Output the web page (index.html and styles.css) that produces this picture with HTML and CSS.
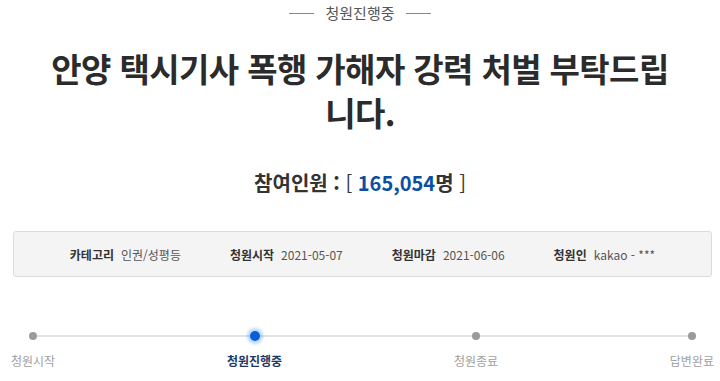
FILE: index.html
```html
<!DOCTYPE html>
<html lang="ko">
<head>
    <meta charset="UTF-8">
    <meta name="viewport" content="width=device-width, initial-scale=1.0">
    <title>청원 상세</title>
    <link rel="stylesheet" href="styles.css">
</head>
<body>
    <div class="wrap">
        <div class="state">
            <span class="state_line"></span>
            <span class="state_txt">청원진행중</span>
            <span class="state_line"></span>
        </div>
        <h1 class="title">안양 택시기사 폭행 가해자 강력 처벌 부탁드립<br>니다.</h1>
        <p class="count">참여인원 : <span class="bracket">[</span> <span class="num">165,054</span>명 <span class="bracket">]</span></p>
        <ul class="info">
            <li class="info_li"><strong>카테고리</strong><span>인권/성평등</span></li>
            <li class="info_li"><strong>청원시작</strong><span>2021-05-07</span></li>
            <li class="info_li"><strong>청원마감</strong><span>2021-06-06</span></li>
            <li class="info_li"><strong>청원인</strong><span>kakao - ***</span></li>
        </ul>
        <ul class="progress">
            <li class="step">
                <span class="dot"></span>
                <span class="step_name">청원시작</span>
            </li>
            <li class="step on">
                <span class="dot"></span>
                <span class="step_name">청원진행중</span>
            </li>
            <li class="step">
                <span class="dot"></span>
                <span class="step_name">청원종료</span>
            </li>
            <li class="step">
                <span class="dot"></span>
                <span class="step_name">답변완료</span>
            </li>
        </ul>
    </div>
</body>
</html>
```
FILE: styles.css
```css
*{
    margin: 0;
    padding: 0;
    list-style: none;
    box-sizing: border-box;
}
body{
    background: #fff;
    font-family: "Noto Sans CJK KR", "Noto Sans", sans-serif;
    color: #333;
}
.wrap{
    width: 720px;
    overflow: hidden;
}
.state{
    display: flex;
    justify-content: center;
    align-items: center;
    gap: 11px;
    padding-top: 3px;
    height: 23px;
}
.state_line{
    width: 25px;
    height: 1px;
    background: #888;
}
.state_txt{
    font-size: 15px;
    line-height: 20px;
    color: #555;
}
.title{
    margin-top: 23px;
    font-size: 33px;
    line-height: 44px;
    font-weight: 700;
    text-align: center;
    color: #2b2b2b;
    letter-spacing: -0.6px;
}
.count{
    margin-top: 35px;
    font-size: 20px;
    line-height: 28px;
    font-weight: 700;
    text-align: center;
    color: #333;
}
.count .bracket{
    font-weight: 400;
}
.count .num{
    color: #0b4ea2;
}
.info{
    margin: 34px 8px 0 13px;
    height: 46px;
    border: 1px solid #dcdcdc;
    border-radius: 3px;
    background: #f4f4f4;
    display: flex;
    justify-content: center;
    align-items: center;
    gap: 49px;
    font-size: 12px;
}
.info_li{
    display: flex;
    gap: 7px;
    white-space: nowrap;
}
.info_li strong{
    font-weight: 700;
    color: #333;
}
.info_li span{
    color: #555;
}
.progress{
    position: relative;
    margin-top: 54px;
    padding: 0 6px 0 11px;
    display: flex;
    justify-content: space-between;
}
.progress::before{
    content: "";
    position: absolute;
    left: 35px;
    right: 31px;
    top: 4px;
    height: 2px;
    background: #e2e2e2;
}
.step{
    display: flex;
    flex-direction: column;
    align-items: center;
    gap: 12px;
}
.dot{
    position: relative;
    width: 8px;
    height: 8px;
    margin-top: 1px;
    border-radius: 50%;
    background: #9a9a9a;
}
.step_name{
    font-size: 12px;
    line-height: 18px;
    color: #a0a0a0;
    white-space: nowrap;
}
.step.on .dot{
    width: 10px;
    height: 10px;
    margin: 0 0 -1px;
    background: #0a5fd3;
    box-shadow: 0 0 3px 3px rgba(60, 150, 255, 0.35);
}
.step.on .step_name{
    font-weight: 700;
    color: #1d3866;
}
```
